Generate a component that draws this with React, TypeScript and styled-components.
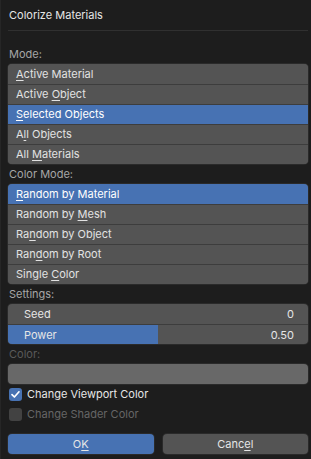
import React from 'react'
import styled, { createGlobalStyle } from 'styled-components'

const GlobalStyle = createGlobalStyle`
  html, body {
    margin: 0;
    padding: 0;
    background: #1d1d1d;
  }
  body {
    font-family: Inter, 'DejaVu Sans', sans-serif;
    font-size: 11px;
    color: #e6e6e6;
  }
`

const modes = [
  { label: 'Active Material', key: 0 },
  { label: 'Active Object', key: 7 },
  { label: 'Selected Objects', key: 0 },
  { label: 'All Objects', key: 1 },
  { label: 'All Materials', key: 4 },
]

const colorModes = [
  { label: 'Random by Material', key: 0 },
  { label: 'Random by Mesh', key: 10 },
  { label: 'Random by Object', key: 2 },
  { label: 'Random by Root', key: 3 },
  { label: 'Single Color', key: 7 },
]

function Mnemonic({ text, at }: { text: string; at: number }) {
  return (
    <>
      {text.slice(0, at)}
      <u>{text[at]}</u>
      {text.slice(at + 1)}
    </>
  )
}

function App() {
  const power = 0.5

  return (
    <Dialog>
      <GlobalStyle />
      <Title>Colorize Materials</Title>
      <Separator />

      <Content>
        <Label>Mode:</Label>
        <List>
          {modes.map((m, i) => (
            <Item key={m.label} $active={i === 2}>
              <Mnemonic text={m.label} at={m.key} />
            </Item>
          ))}
        </List>

        <Label>Color Mode:</Label>
        <List>
          {colorModes.map((m, i) => (
            <Item key={m.label} $active={i === 0}>
              <Mnemonic text={m.label} at={m.key} />
            </Item>
          ))}
        </List>

        <Label>Settings:</Label>
        <List>
          <Slider>
            <span>Seed</span>
            <span>0</span>
          </Slider>
          <Slider>
            <SliderFill style={{ width: `${power * 100}%` }} />
            <span>Power</span>
            <span>{power.toFixed(2)}</span>
          </Slider>
        </List>

        <Label $disabled>Color:</Label>
        <ColorField />

        <CheckRow>
          <Checkbox $checked>
            <svg width='11' height='11' viewBox='0 0 11 11'>
              <path
                d='M2 5.6 L4.4 8 L9 2.8'
                fill='none'
                stroke='#ffffff'
                strokeWidth='1.7'
                strokeLinecap='round'
                strokeLinejoin='round'
              />
            </svg>
          </Checkbox>
          Change Viewport Color
        </CheckRow>
        <CheckRow $disabled>
          <Checkbox />
          Change Shader Color
        </CheckRow>

        <Buttons>
          <Button $primary>
            O<u>K</u>
          </Button>
          <Button>
            Canc<u>e</u>l
          </Button>
        </Buttons>
      </Content>
    </Dialog>
  )
}

export default App

const Dialog = styled.div`
  width: 311px;
  height: 459px;
  box-sizing: border-box;
  border-left: 1px solid #262626;
  display: flex;
  flex-direction: column;
`

const Title = styled.div`
  height: 30px;
  line-height: 31px;
  padding-left: 8px;
  color: #e6e6e6;
`

const Separator = styled.div`
  height: 1px;
  margin: 0 3px 0 7px;
  background: #303030;
`

const Content = styled.div`
  display: flex;
  flex-direction: column;
  padding: 13px 3px 0 7px;
`

const Label = styled.div<{ $disabled?: boolean }>`
  height: 20px;
  line-height: 20px;
  padding-left: 1px;
  color: ${(p) => (p.$disabled ? '#5a5a5a' : '#a6a6a6')};
`

const List = styled.div`
  display: flex;
  flex-direction: column;
  border-radius: 4px;
  overflow: hidden;
  background: #545454;
  box-shadow: 0 0 0 1px #2a2a2a;
`

const Item = styled.div<{ $active?: boolean }>`
  height: 19px;
  line-height: 19px;
  padding-left: 8px;
  background: ${(p) => (p.$active ? '#4772b3' : '#545454')};
  color: ${(p) => (p.$active ? '#ffffff' : '#e2e2e2')};
  border-top: 1px solid #3d3d3d;

  &:first-child {
    border-top: none;
    height: 20px;
    line-height: 20px;
  }

  & u {
    text-underline-offset: 2px;
  }
`

const Slider = styled.div`
  position: relative;
  height: 19px;
  display: flex;
  justify-content: space-between;
  align-items: center;
  padding: 0 14px 0 16px;
  border-top: 1px solid #3d3d3d;

  &:first-child {
    border-top: none;
    height: 20px;
  }

  & span {
    position: relative;
  }
`

const SliderFill = styled.div`
  position: absolute;
  left: 0;
  top: 0;
  bottom: 0;
  background: #4772b3;
`

const ColorField = styled.div`
  height: 20px;
  border-radius: 4px;
  background: #686868;
  box-shadow: 0 0 0 1px #2a2a2a;
`

const CheckRow = styled.div<{ $disabled?: boolean }>`
  height: 20px;
  display: flex;
  align-items: center;
  gap: 5px;
  padding-left: 1px;
  color: ${(p) => (p.$disabled ? '#666666' : '#e6e6e6')};
`

const Checkbox = styled.div<{ $checked?: boolean }>`
  width: 13px;
  height: 13px;
  border-radius: 3px;
  display: flex;
  align-items: center;
  justify-content: center;
  background: ${(p) => (p.$checked ? '#4772b3' : '#424242')};
`

const Buttons = styled.div`
  display: grid;
  grid-template-columns: 1fr 1fr;
  gap: 9px;
  margin-top: 10px;
`

const Button = styled.div<{ $primary?: boolean }>`
  height: 20px;
  line-height: 20px;
  text-align: center;
  border-radius: 4px;
  background: ${(p) => (p.$primary ? '#4772b3' : '#545454')};
  color: #e6e6e6;
  box-shadow: 0 0 0 1px #2a2a2a;

  & u {
    text-underline-offset: 2px;
  }
`
